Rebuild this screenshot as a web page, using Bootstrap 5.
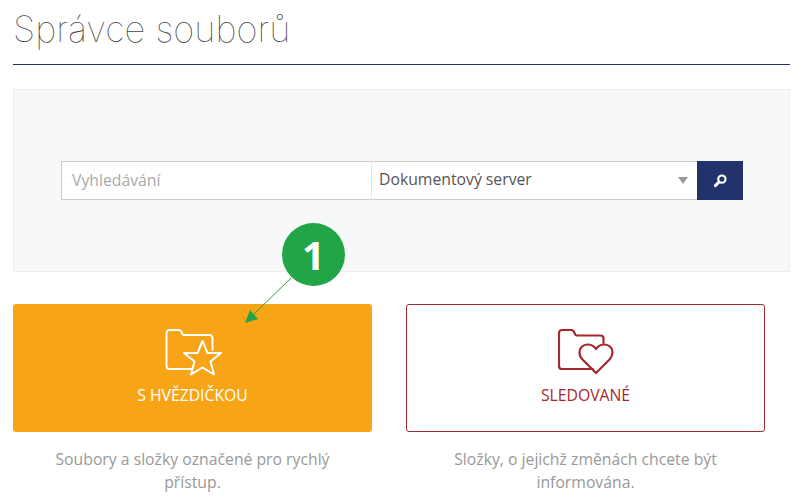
<!DOCTYPE html>
<html lang="cs">
<head>
  <meta charset="UTF-8">
  <title>Správce souborů</title>
  <link href="https://cdn.jsdelivr.net/npm/bootstrap@5.3.0/dist/css/bootstrap.min.css" rel="stylesheet">
  <script src="https://cdn.jsdelivr.net/npm/bootstrap@5.3.0/dist/js/bootstrap.bundle.min.js"></script>
  <style>
    body {
      font-family: "Open Sans", sans-serif;
      color: #555;
      background: #fff;
      overflow: hidden;
    }
    .page-wrap {
      position: relative;
      width: 803px;
      height: 500px;
      padding: 0 13px;
    }
    .page-head {
      height: 65px;
      border-bottom: 1px solid #22336b;
      margin-bottom: 24px;
    }
    .page-head h1 {
      font-family: "Inter", sans-serif;
      font-weight: 100;
      font-size: 36.2px;
      line-height: 58px;
      color: #444;
      margin: 0;
    }
    .search-panel {
      height: 183px;
      background: #f7f9f9;
      border: 1px solid #eceeee;
      padding: 0 47px;
      margin-bottom: 32px;
    }
    .search-row {
      height: 39px;
    }
    .search-input {
      width: 310px;
      height: 39px;
      border: 1px solid #ccc;
      border-right: 0;
      border-radius: 0;
      padding: 0 10px 1px;
      font-size: 15.75px;
      box-shadow: none;
    }
    .search-input::placeholder {
      color: #aaa;
    }
    .search-select {
      width: 326px;
      height: 39px;
      border: 1px solid #ccc;
      border-left: 1px solid #e8e8e8;
      border-right: 0;
      background: #fff;
      padding: 0 7px 1px;
      font-size: 15.75px;
      color: #555;
    }
    .select-caret {
      width: 0;
      height: 0;
      border-left: 5px solid transparent;
      border-right: 5px solid transparent;
      border-top: 7px solid #999;
      margin: 1px 2px 0 0;
    }
    .search-btn {
      width: 46px;
      height: 39px;
      background: #22336b;
      border: 0;
      border-radius: 0;
      padding: 0;
    }
    .tiles {
      display: grid;
      grid-template-columns: 359px 359px;
      column-gap: 34px;
    }
    .tile {
      height: 128px;
      border-radius: 3px;
      font-size: 15.75px;
      text-transform: uppercase;
      padding-top: 24px;
      text-decoration: none;
    }
    .tile svg {
      display: block;
      margin-bottom: 7px;
    }
    .tile-star {
      background: #f7a416;
      color: #fff;
      padding-top: 25px;
    }
    .tile-watch {
      background: #fff;
      color: #a5282e;
      border: 1px solid #a5282e;
    }
    .tile-note {
      font-size: 15.75px;
      line-height: 23px;
      color: #999;
      margin: 16px 0 0;
      padding: 0 30px;
    }
    .callout-arrow {
      position: absolute;
      left: 0;
      top: 0;
      pointer-events: none;
    }
    .callout-num {
      position: absolute;
      left: 282px;
      top: 223px;
      width: 63px;
      height: 63px;
      border-radius: 50%;
      background: #21a546;
      color: #fff;
      font-size: 40px;
      font-weight: 700;
    }
  </style>
</head>
<body>
  <div class="page-wrap">
    <div class="page-head"><h1>Správce souborů</h1></div>

    <div class="search-panel d-flex align-items-center">
      <div class="search-row d-flex">
        <input class="form-control search-input" type="text" placeholder="Vyhledávání">
        <div class="search-select d-flex align-items-center justify-content-between">
          <span>Dokumentový server</span>
          <span class="select-caret"></span>
        </div>
        <button class="search-btn d-flex align-items-center justify-content-center" type="button" aria-label="Hledat">
          <svg width="15" height="15" viewBox="0 0 14 14" fill="none" stroke="#fff">
            <circle cx="8.3" cy="5.7" r="3.4" stroke-width="2"/>
            <path d="M5.6 8.4 2.2 11.8" stroke-width="2.8" stroke-linecap="round"/>
          </svg>
        </button>
      </div>
    </div>

    <div class="tiles">
      <div>
        <a class="tile tile-star d-flex flex-column align-items-center" href="#">
          <svg width="58" height="48" viewBox="0 0 58 48" fill="none" stroke="#fff" stroke-width="2" stroke-linejoin="round" stroke-linecap="round">
            <path d="M27.500 40H5.500a3 3 0 0 1-3-3V4a3 3 0 0 1 3-3h9.500a3 3 0 0 1 2.500 2l.7 1.500a2 2 0 0 0 2 1.500H45.500a3 3 0 0 1 3 3V21"/>
            <path d="M38.500 12 43.500 24H57L46.500 32.500 50 45.500 38.500 38.500 27 45.500 30.500 32.500 20 24H33.500Z"/>
          </svg>
          <span>S hvězdičkou</span>
        </a>
        <p class="tile-note text-center">Soubory a složky označené pro rychlý přístup.</p>
      </div>
      <div>
        <a class="tile tile-watch d-flex flex-column align-items-center" href="#">
          <svg width="56" height="48" viewBox="0 0 56 48" fill="none" stroke="#a5282e" stroke-width="2.200" stroke-linejoin="round" stroke-linecap="round">
            <path d="M35 40H4a3 3 0 0 1-3-3V4a3 3 0 0 1 3-3h9.500a3 3 0 0 1 2.500 2l1 2a2 2 0 0 0 2 1.500H42.500a3 3 0 0 1 3 3V14"/>
            <path d="M38 44 24.500 30.500C22 28 21.500 26 21.500 23.500 21.500 19 25 15.500 29.500 15.500 33 15.500 36 17 38 20 40 17 43 15.500 46.500 15.500 51 15.500 54.500 19 54.500 23.500 54.500 26 53.500 28 51.500 30.500Z"/>
          </svg>
          <span>Sledované</span>
        </a>
        <p class="tile-note text-center">Složky, o jejichž změnách chcete být informována.</p>
      </div>
    </div>

    <svg class="callout-arrow" width="803" height="500" viewBox="0 0 803 500">
      <path d="M291 278 252 316" stroke="#21a546" stroke-width="1"/>
      <path d="M245 323 250 310 258 319Z" fill="#21a546"/>
    </svg>
    <div class="callout-num d-flex align-items-center justify-content-center">1</div>
  </div>
</body>
</html>
